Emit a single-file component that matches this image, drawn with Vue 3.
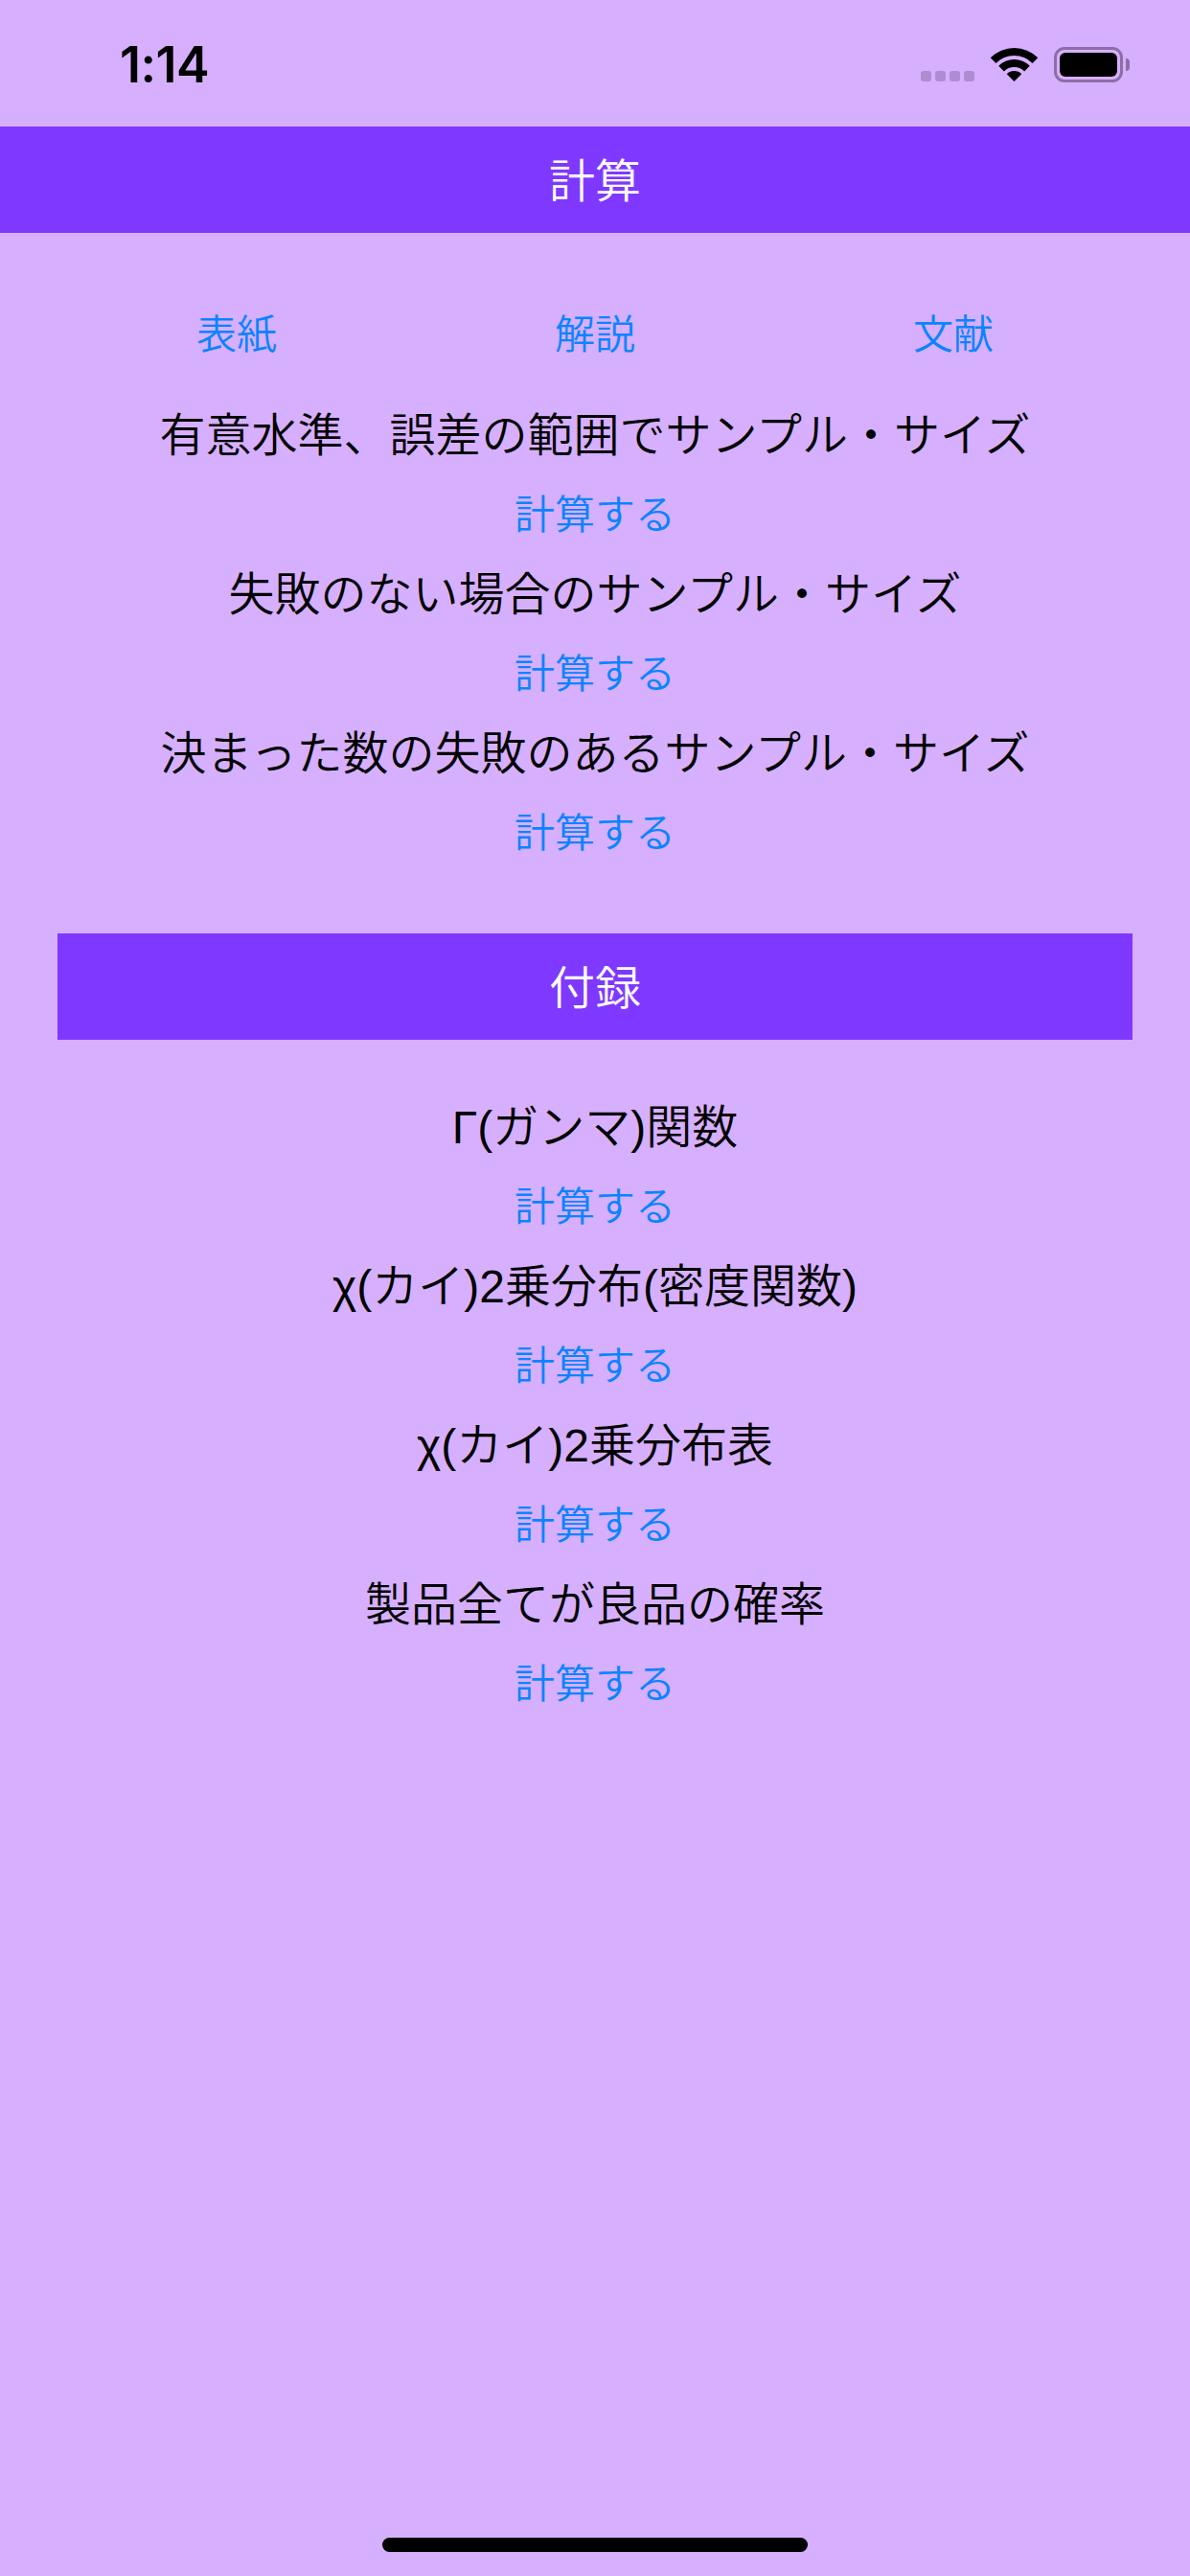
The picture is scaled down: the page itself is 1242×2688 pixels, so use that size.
<template>
  <div class="page">
    <div class="status-bar">
      <span class="time">1:14</span>
      <div class="status-icons">
        <div class="signal">
          <span v-for="n in 4" :key="n" class="dot"></span>
        </div>
        <svg class="wifi" width="51" height="36" viewBox="-1 0 51 36">
          <path d="M-.25 11.25A35 35 0 0 1 49.25 11.25L43.59 16.91A27 27 0 0 0 5.41 16.91Z" />
          <path d="M8.24 19.74A23 23 0 0 1 40.76 19.74L35.1 25.4A15 15 0 0 0 13.9 25.4Z" />
          <path d="M16.72 28.22A11 11 0 0 1 32.28 28.22L24.5 36Z" />
        </svg>
        <div class="battery">
          <div class="battery-fill"></div>
        </div>
        <div class="battery-nub"></div>
      </div>
    </div>

    <header class="bar">計算</header>

    <main class="content">
      <nav class="nav">
        <a v-for="item in navItems" :key="item" class="nav-link">{{ item }}</a>
      </nav>
      <div class="list">
        <template v-for="item in calcItems" :key="item">
          <div class="title">{{ item }}</div>
          <a class="link">計算する</a>
        </template>
      </div>

      <header class="bar sub-bar">付録</header>

      <div class="list appendix">
        <template v-for="item in appendixItems" :key="item">
          <div class="title">{{ item }}</div>
          <a class="link">計算する</a>
        </template>
      </div>
    </main>

    <div class="home-indicator"></div>
  </div>
</template>

<script setup>
const navItems = ['表紙', '解説', '文献'];

const calcItems = [
  '有意水準、誤差の範囲でサンプル・サイズ',
  '失敗のない場合のサンプル・サイズ',
  '決まった数の失敗のあるサンプル・サイズ',
];

const appendixItems = [
  'Γ(ガンマ)関数',
  'χ(カイ)2乗分布(密度関数)',
  'χ(カイ)2乗分布表',
  '製品全てが良品の確率',
];
</script>

<style scoped>
.page {
  position: relative;
  width: 1242px;
  height: 2688px;
  overflow: hidden;
  background: #d7afff;
  font-family: "Liberation Sans", "Noto Sans CJK JP", sans-serif;
  font-weight: 350;
  color: #000;
}

.status-bar {
  display: flex;
  justify-content: space-between;
  height: 132px;
  box-sizing: border-box;
  padding: 49px 63px 0 125px;
}

.time {
  font-family: Inter, "Liberation Sans", sans-serif;
  font-size: 52px;
  font-weight: 600;
  line-height: 37px;
  letter-spacing: -.5px;
}

.status-icons {
  display: flex;
  align-items: flex-start;
  height: 37px;
}

.signal {
  display: flex;
  gap: 4px;
  margin: 25px 16px 0 0;
}

.dot {
  width: 11px;
  height: 11px;
  border-radius: 3px;
  background: #af8cd2;
}

.wifi {
  fill: #000;
  margin-right: 16px;
}

.battery {
  box-sizing: border-box;
  width: 72px;
  height: 37px;
  padding: 3px;
  border: 3px solid #8c6ea5;
  border-radius: 11px;
}

.battery-fill {
  height: 100%;
  border-radius: 6px;
  background: #000;
}

.battery-nub {
  width: 4px;
  height: 13px;
  margin: 12px 0 0 3px;
  border-radius: 0 4px 4px 0;
  background: #8c6ea5;
}

.bar {
  display: flex;
  align-items: center;
  justify-content: center;
  height: 111px;
  padding-bottom: 5px;
  box-sizing: border-box;
  background: #7f38ff;
  color: #fff;
  font-size: 48px;
}

.content {
  padding: 0 60px;
}

.nav {
  display: grid;
  grid-template-columns: repeat(3, 1fr);
  padding-top: 61px;
  padding-bottom: 22px;
}

.nav-link {
  text-align: center;
  font-size: 42px;
  padding-top: 8px;
  line-height: 75px;
  color: #0a84ff;
}

.list {
  display: flex;
  flex-direction: column;
}

.title {
  text-align: center;
  font-size: 48px;
  padding-top: 8px;
  line-height: 75px;
  white-space: nowrap;
}

.link {
  text-align: center;
  font-size: 42px;
  padding-top: 8px;
  line-height: 75px;
  color: #0a84ff;
}

.sub-bar {
  margin-top: 67px;
}

.appendix {
  padding-top: 46px;
}

.home-indicator {
  position: absolute;
  left: 399px;
  bottom: 25px;
  width: 444px;
  height: 15px;
  border-radius: 8px;
  background: #000;
}
</style>
